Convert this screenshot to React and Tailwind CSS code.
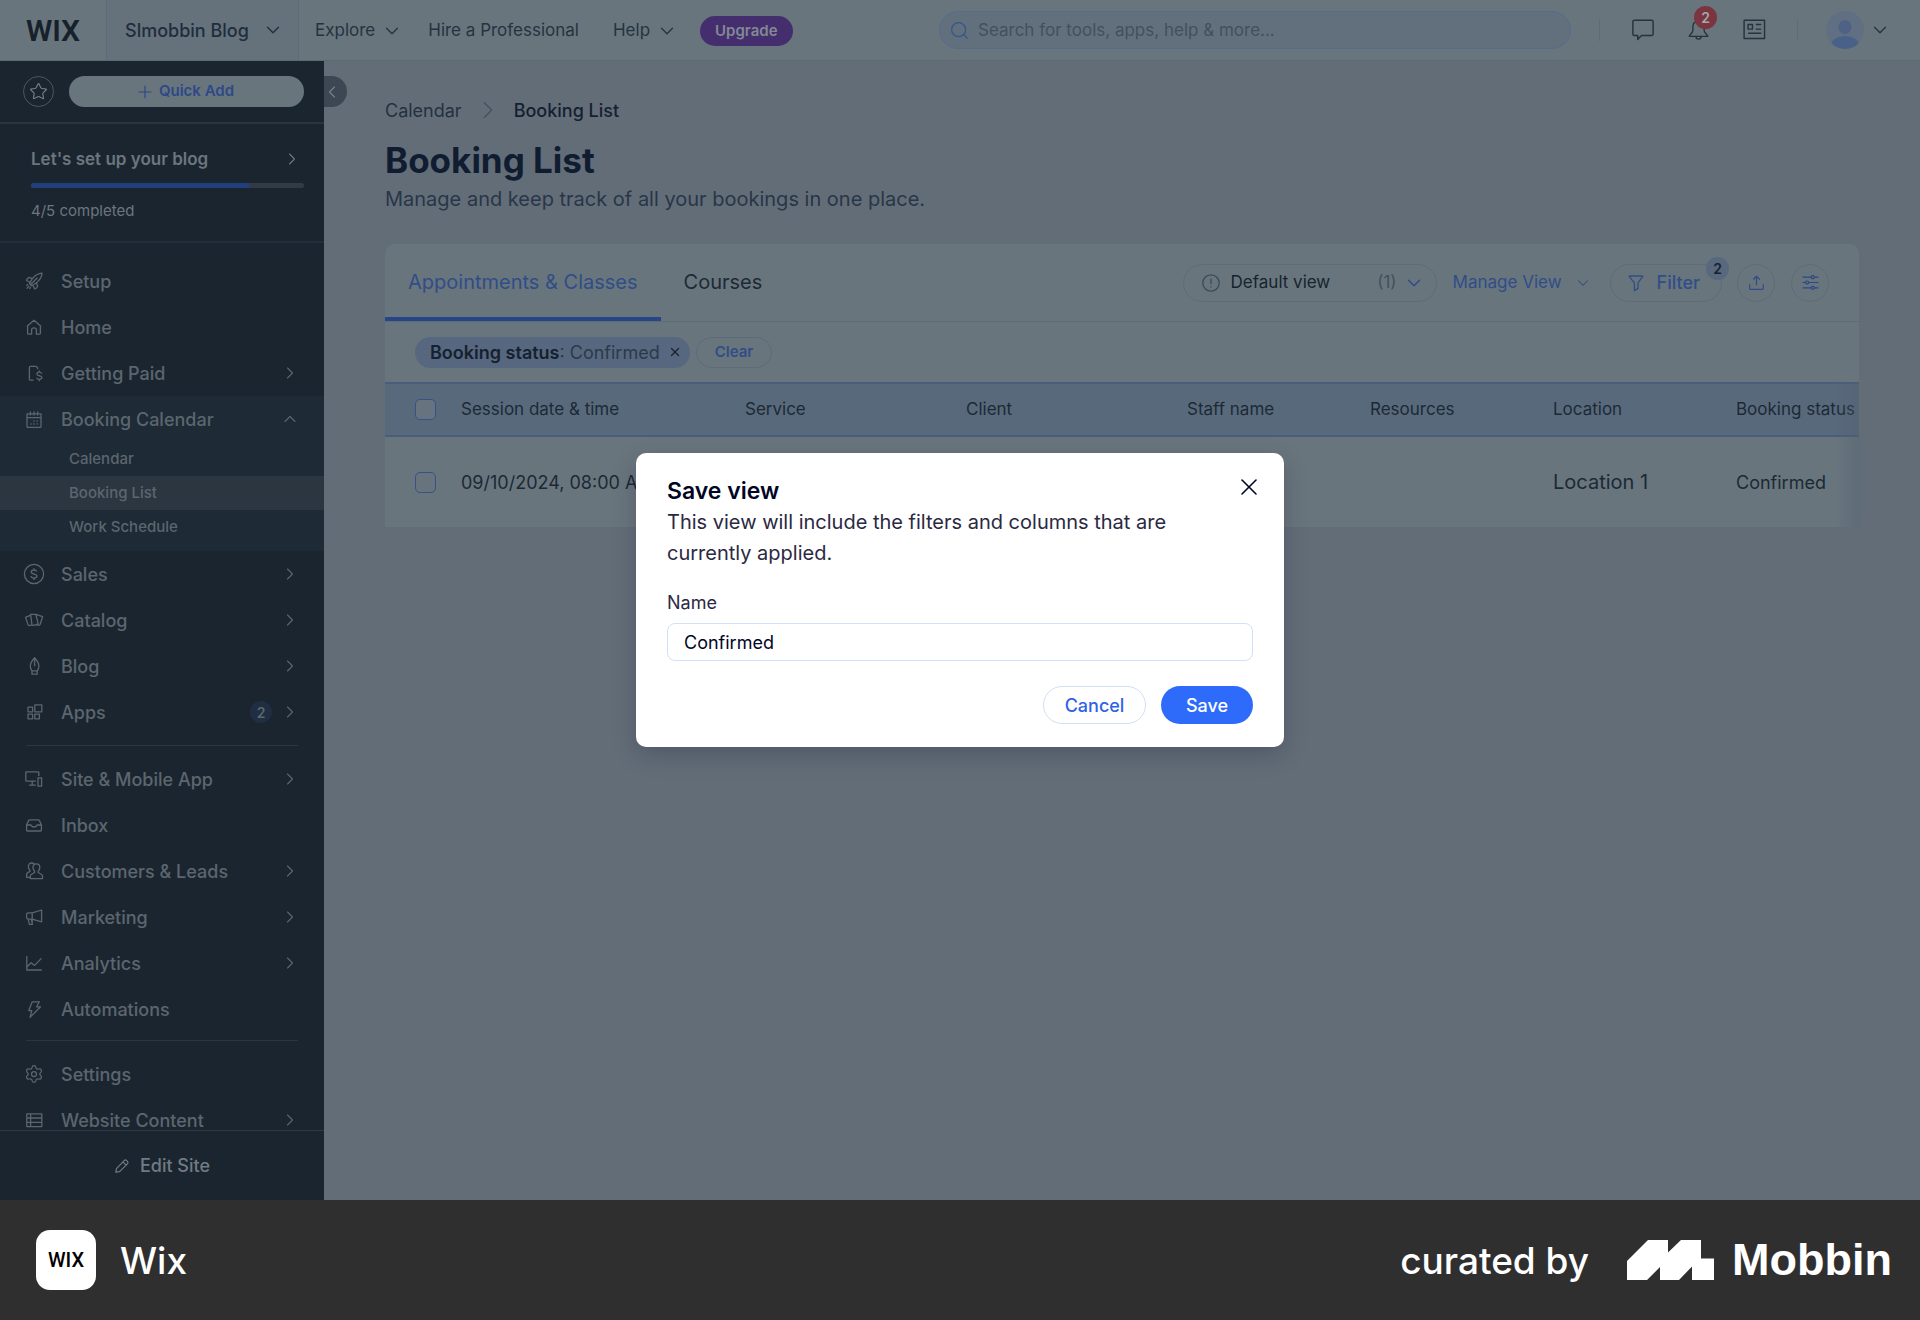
import { useState } from "react";
import { ChevronDown, ChevronLeft, ChevronRight, ChevronUp, Plus, Search, Settings, Star, X } from "lucide-react";

const ICONS = {
  rocket:
    "M17 1.2c-4 .2-7 2.2-10 6L4.4 11.6l2.2 2.2 4.2-2.6c4-3 6-6 6.2-10zM7.4 6.6 4.2 5.4c-1.2.4-2.3 1.6-2.7 3.1l3.7 2M11.4 10.8l1.2 3.4c-.4 1.3-1.4 2.2-2.8 2.8l-2-3.8M12.4 5.8 5.4 12.8M3 12.2l-1.6 1.6M4.2 14l-2.6 2.6M5.8 15.2l-1.6 1.6",
  home: "M1.8 8.4 9 2.2l7.2 6.2M2.6 7.8v7.4c0 .6.4 1 1 1h3v-4.4c0-1.2.9-2 2.4-2s2.4.8 2.4 2v4.4h3c.6 0 1-.4 1-1V7.8",
  paid: "M12.6 5.2V3.8l-1.4-1.4H5.4c-.6 0-1 .4-1 1v11.8c0 .6.4 1 1 1h3.2M16.8 9.6c-.3-1-1.2-1.5-2.5-1.5s-2.4.6-2.4 1.8c0 2.7 5 1 5 3.7 0 1.2-1 1.8-2.5 1.8s-2.5-.6-2.7-1.7M14.3 6.4v1.7M14.3 15.4v1.8",
  calendar:
    "M2 3.8h14v12.6c0 .6-.4 1-1 1H3c-.6 0-1-.4-1-1zM2 7.6h14M5.4 1.4v4M9 1.4v4M12.6 1.4v4M8.4 11h1.2M11.6 11h1.2M5.4 14h1.2M8.4 14h1.2M11.6 14h1.2",
  sales:
    "M9 -.6a9.6 9.6 0 1 0 0 19.2a9.6 9.6 0 1 0 0-19.2zM11.8 6.6c-.3-1-1.3-1.6-2.8-1.6s-2.7.7-2.7 2c0 3 5.6 1.1 5.6 4.1 0 1.3-1.2 2-2.9 2s-2.8-.7-3-1.9M9 3.2V5M9 13.1v1.8",
  catalog:
    "M5.6 3.4h5.2l2.2 8.2c.2.8-.2 1.6-1 1.8l-3.4.9c-.8.2-1.5-.2-1.7-1zM5.2 4.4l-4.6 2 2.4 7.2c.3.8 1 1.1 1.8.9l2-.7M11 3.4l6.6 2.2-2.4 7.6c-.3.8-.9 1.2-1.7 1l-2.5-.7",
  blog: "M9.6 .8c-3 3.4-4.3 6-4.3 8.3 0 1.8.8 3.6 1.6 4.8h5.4c.8-1.2 1.6-3 1.6-4.8 0-2.3-1.3-4.9-4.3-8.3zM9.6 .8v8.4M7 14v3.2h5.2V14",
  apps: "M9.8 1.8h7v7h-7zM3 4.2h4.6v4.6H3zM3 11.2h4.6v4.6H3zM9.8 11.2h4.6v4.6H9.8z",
  site: "M13.8 6V2.6c0-.5-.3-.8-.8-.8H1.6c-.5 0-.8.3-.8.8v7.8c0 .5.3.8.8.8h9.2M7.2 11.2v4M4 15.2h6.8M13 7.8h3.6v8.4H13z",
  inbox:
    "M1.6 8.8l2.2-4.4c.2-.4.5-.6.9-.6h8.6c.4 0 .7.2.9.6l2.2 4.4v5.4c0 .5-.3.8-.8.8H2.4c-.5 0-.8-.3-.8-.8zM1.6 9h4.2c.4 0 .4 2 3.2 2s2.8-2 3.2-2h4.2",
  customers:
    "M11.4 1.8c2 0 3.4 1.6 3.4 3.8 0 1.6-.6 2.9-1.6 3.7v1.2l3.4 2c.6.4.9 1 .9 1.7v2.4H5.3v-2.4c0-.7.3-1.3.9-1.7l3.4-2V9.3C8.6 8.5 8 7.2 8 5.6c0-2.2 1.4-3.8 3.4-3.8zM9 2c-.6-.7-1.4-1-2.3-1C4.7 1 3.4 2.5 3.4 4.7c0 1.5.6 2.7 1.5 3.5v1.2l-2.4 1.5c-.6.4-.9 1-.9 1.7v2.8h3.5",
  marketing:
    "M7.2 4.8 16.6 2v11.8l-9.4-2.6zM7.2 4.8H3.4c-1 0-1.8.8-1.8 1.8v2.8c0 1 .8 1.8 1.8 1.8h3.8M3.2 11.2l1.2 5.2h3l-1-5.2M7.2 11.2v5.2",
  analytics: "M1.8 2v14h15M1.8 13l4.4-4.2 3.4 2.6 6.8-7",
  automations: "M7.2 1.8h7.2l-2.8 5h4L5 17.4l1.8-6.8H3.8z",
  content: "M1.8 2.8h15v12.8h-15zM5.6 2.8v12.8M1.8 7h15M1.8 11.3h15",
  pencil: "M2 15.9l.8-4 8.6-9c.8-.8 2-.8 2.8 0l.9.9c.8.8.8 2 0 2.8l-8.8 8.7zM10 4.4l3.6 3.6",
  chat: "M2.2 1.2h15.6c.8 0 1.4.6 1.4 1.4v11c0 .8-.6 1.4-1.4 1.4H8.6L5.2 18.6V15h-3c-.8 0-1.4-.6-1.4-1.4v-11c0-.8.6-1.4 1.4-1.4z",
  bell: "M10 1.2c-3.4 0-5.4 2.4-5.4 5.6v3.4c0 2-2.8 3-3.4 5.4h17.6c-.6-2.4-3.4-3.4-3.4-5.4V6.8c0-3.2-2-5.6-5.4-5.6zM7.6 15.8c0 1.4 1 2.4 2.4 2.4s2.4-1 2.4-2.4",
  news: "M1 1.2h18.6v16.6H1zM4.6 5h4v4.2h-4zM11.6 5h5M11.6 9.2h5M4.6 13h12",
  filter: "M1.6 2h12.8c.4 0 .5.4.3.7L10 8.8v5.6l-3.6 2.4v-8L1.3 2.7c-.2-.3-.1-.7.3-.7z",
  share: "M9 12V2.6M5.6 5.8 9 2.4l3.4 3.4M1.8 10.8v4.4c0 .6.4 1 1 1h12.4c.6 0 1-.4 1-1v-4.4",
  sliders:
    "M.6 3.4h9.2M13 3.4h4.4M11.4 1.8a1.6 1.6 0 1 0 0 3.2a1.6 1.6 0 1 0 0-3.2zM.6 9h3.2M7 9h10.4M5.4 7.4a1.6 1.6 0 1 0 0 3.2a1.6 1.6 0 1 0 0-3.2zM.6 14.6h9.2M13 14.6h4.4M11.4 13a1.6 1.6 0 1 0 0 3.2a1.6 1.6 0 1 0 0-3.2z",
  alert: "M9 .8a8.2 8.2 0 1 0 0 16.4a8.2 8.2 0 1 0 0-16.4zM9 4.6v5.6M9 12.2v1.2",
};

function Icon({ name, size = 18, box = 18, className = "" }) {
  return (
    <svg
      width={size}
      height={size}
      viewBox={`0 0 ${box} ${box}`}
      fill="none"
      stroke="currentColor"
      strokeWidth="1.3"
      strokeLinejoin="round"
      overflow="visible"
      aria-hidden="true"
      className={`shrink-0 ${className}`}
    >
      <path d={ICONS[name]} />
    </svg>
  );
}

const mainMenu = [
  { label: "Setup", icon: "rocket" },
  { label: "Home", icon: "home" },
  { label: "Getting Paid", icon: "paid", arrow: true },
  {
    label: "Booking Calendar",
    icon: "calendar",
    children: ["Calendar", "Booking List", "Work Schedule"],
  },
  { label: "Sales", icon: "sales", arrow: true },
  { label: "Catalog", icon: "catalog", arrow: true },
  { label: "Blog", icon: "blog", arrow: true },
  { label: "Apps", icon: "apps", arrow: true, badge: 2 },
];

const siteMenu = [
  { label: "Site & Mobile App", icon: "site", arrow: true },
  { label: "Inbox", icon: "inbox" },
  { label: "Customers & Leads", icon: "customers", arrow: true },
  { label: "Marketing", icon: "marketing", arrow: true },
  { label: "Analytics", icon: "analytics", arrow: true },
  { label: "Automations", icon: "automations" },
];

const settingsMenu = [
  { label: "Settings", icon: "settings" },
  { label: "Website Content", icon: "content", arrow: true },
];

const columns = [
  { label: "Session date & time", width: "w-[284px]" },
  { label: "Service", width: "w-[221px]" },
  { label: "Client", width: "w-[221px]" },
  { label: "Staff name", width: "w-[183px]" },
  { label: "Resources", width: "w-[183px]" },
  { label: "Location", width: "w-[183px]" },
  { label: "Booking status", width: "w-[183px]" },
];

function MenuItem({ item }) {
  return (
    <li className={item.children ? "bg-[#1e2a35] pb-[7px]" : ""}>
      <a href="#" className="flex h-[46px] items-center pl-[25px] pr-6 text-[18px] font-medium">
        {item.icon === "settings" ? (
          <Settings size={20} strokeWidth={1.5} className="-mx-px shrink-0" />
        ) : (
          <Icon name={item.icon} />
        )}
        <span className="ml-[18px] flex-1">{item.label}</span>
        {item.badge && (
          <span className="mr-2 flex size-[22px] items-center justify-center rounded-full bg-[#202e43] text-[14px] font-semibold">
            {item.badge}
          </span>
        )}
        {item.arrow && <ChevronRight size={20} strokeWidth={1.3} />}
        {item.children && <ChevronUp size={20} strokeWidth={1.3} />}
      </a>
      {item.children && (
        <ul>
          {item.children.map((child) => (
            <li key={child}>
              <a
                href="#"
                className={`flex h-[34px] items-center pl-[69px] text-[15px] font-medium ${
                  child === "Booking List" ? "bg-[#2b3641]" : ""
                }`}
              >
                {child}
              </a>
            </li>
          ))}
        </ul>
      )}
    </li>
  );
}

function Menu({ items }) {
  return (
    <ul>
      {items.map((item) => (
        <MenuItem key={item.label} item={item} />
      ))}
    </ul>
  );
}

function Header() {
  return (
    <header className="flex h-[61px] shrink-0 items-center border-b border-[#5d6973] bg-[#69757d] text-[17px] text-[#25333f]">
      <a
        href="#"
        className="flex h-full w-[107px] shrink-0 items-center justify-center border-r border-[#5f6b76] font-['Roboto',sans-serif] text-[30px] font-semibold text-[#16212b]"
      >
        WIX
      </a>
      <button className="flex h-full w-[192px] shrink-0 items-center justify-between border-r border-[#5f6b76] bg-[#65727c] pl-[18px] pr-[14px] text-[18px] font-medium text-[#1f2d3c]">
        Slmobbin Blog
        <ChevronDown size={22} strokeWidth={1.4} />
      </button>
      <nav className="flex shrink-0 items-center pl-4 pt-0.5">
        <button className="flex items-center gap-1.5">
          Explore
          <ChevronDown size={22} strokeWidth={1.4} />
        </button>
        <a href="#" className="ml-[25px]">
          Hire a Professional
        </a>
        <button className="ml-[34px] flex items-center gap-1.5">
          Help
          <ChevronDown size={22} strokeWidth={1.4} />
        </button>
        <button className="ml-[22px] h-[30px] rounded-full bg-[#442e6e] px-[15px] text-[15px] font-semibold text-[#828995]">
          Upgrade
        </button>
      </nav>
      <div className="ml-auto flex h-[38px] w-[632px] items-center gap-2 rounded-full border border-[#586b8d] bg-[#61707c] pl-[9px]">
        <Search size={21} strokeWidth={1.5} className="shrink-0 text-[#37568a]" />
        <input
          type="text"
          aria-label="Search"
          placeholder="Search for tools, apps, help & more..."
          className="w-full bg-transparent pt-0.5 text-[17px] outline-none placeholder:text-[#42505c]"
        />
      </div>
      <div className="flex shrink-0 items-center pl-7 pr-[29px]">
        <span className="h-[22px] w-px bg-[#5f6b76]" />
        <button aria-label="Chat" className="ml-8">
          <Icon name="chat" size={22} box={20} />
        </button>
        <button aria-label="Notifications" className="relative ml-[34px]">
          <Icon name="bell" size={21} box={20} />
          <span className="absolute -right-2 -top-[14px] flex size-[23px] items-center justify-center rounded-full bg-[#7b3540] text-[14px] font-semibold text-[#a3a8ac]">
            2
          </span>
        </button>
        <button aria-label="News" className="ml-[34px]">
          <Icon name="news" size={22} box={20} />
        </button>
        <span className="ml-8 h-[22px] w-px bg-[#5f6b76]" />
        <button aria-label="Account" className="ml-7 flex items-center gap-[5px]">
          <svg width="38" height="38" viewBox="0 0 38 38" aria-hidden="true">
            <clipPath id="avatar">
              <circle cx="19" cy="19" r="19" />
            </clipPath>
            <g clipPath="url(#avatar)">
              <rect width="38" height="38" fill="#616f83" />
              <ellipse cx="19" cy="16" rx="6.5" ry="7" fill="#4d6285" />
              <ellipse cx="19" cy="34.5" rx="14" ry="9.5" fill="#496089" />
            </g>
          </svg>
          <ChevronDown size={22} strokeWidth={1.4} />
        </button>
      </div>
    </header>
  );
}

function Sidebar() {
  return (
    <aside className="relative flex w-[324px] shrink-0 flex-col bg-[#1b2530] text-[#5b666f]">
      <div className="flex shrink-0 items-center gap-[15px] border-b-2 border-[#28343e] pb-[15px] pl-[23px] pr-5 pt-[15px]">
        <button aria-label="Favorites" className="flex size-[31px] shrink-0 items-center justify-center rounded-full border border-[#4a5660] text-[#76828a]">
          <Star size={19} strokeWidth={1.4} />
        </button>
        <button className="flex h-[31px] flex-1 items-center justify-center gap-1 rounded-full bg-[#69757d] pr-1 text-[15px] font-semibold text-[#2c4988]">
          <Plus size={20} strokeWidth={1.4} />
          Quick Add
        </button>
      </div>
      <div className="shrink-0 border-b-2 border-[#222e39] pb-[18px] pl-[31px] pr-5 pt-[23px] text-[#6b767e]">
        <a href="#" className="flex items-center justify-between pr-0.5 text-[17px] font-semibold leading-6">
          Let's set up your blog
          <ChevronRight size={20} strokeWidth={1.3} />
        </a>
        <div className="mt-3 h-[5px] rounded-full bg-[#303b46]">
          <div className="h-full w-4/5 rounded-l-full bg-[#223f7d]" />
        </div>
        <p className="mt-[11px] text-[15px] leading-6">4/5 completed</p>
      </div>
      <nav className="min-h-0 flex-1 overflow-hidden pt-[15px]">
        <Menu items={mainMenu} />
        <hr className="mx-[26px] my-2.5 border-[#2a3640]" />
        <Menu items={siteMenu} />
        <hr className="mx-[26px] mb-2.5 mt-2 border-[#2a3640]" />
        <Menu items={settingsMenu} />
      </nav>
      <a href="#" className="flex h-[70px] shrink-0 items-center justify-center gap-2.5 border-t border-[#2d3944] text-[18px] font-medium text-[#707b83]">
        <Icon name="pencil" size={16} />
        Edit Site
      </a>
      <button
        aria-label="Collapse sidebar"
        className="absolute left-full top-[15px] flex h-[31px] w-[23px] items-center rounded-r-full bg-[#3c4753] text-[#76808a]"
      >
        <ChevronLeft size={20} strokeWidth={1.4} className="-ml-0.5" />
      </button>
    </aside>
  );
}

function Toolbar() {
  return (
    <div className="flex items-center justify-between border-b border-[#5f6b75] pr-[30px]">
      <div className="flex h-[77px] text-[20px]">
        <button className="border-b-4 border-[#264687] px-[23px] pt-0.5 text-[#304d87]">Appointments & Classes</button>
        <button className="border-b-4 border-transparent px-[23px] pt-0.5 text-[#1d2a36]">Courses</button>
      </div>
      <div className="flex items-center text-[17px]">
        <button className="flex h-[38px] w-[254px] items-center rounded-full border border-[#5f6b77] pl-[18px] pr-[11px] text-[#17232e]">
          <Icon name="alert" className="text-[#3c4a56]" />
          <span className="ml-[11px] flex-1 text-left">Default view</span>
          <span className="mr-1.5 text-[#43505c]">(1)</span>
          <ChevronDown size={22} strokeWidth={1.5} className="text-[#2d4b88]" />
        </button>
        <button className="ml-4 flex items-center gap-3 text-[#304d87]">
          Manage View
          <ChevronDown size={18} strokeWidth={1.4} />
        </button>
        <button className="relative ml-[18px] flex h-[38px] items-center gap-[11px] rounded-full border border-[#5f6b77] pl-[17px] pr-[21px] text-[18px] font-medium text-[#304d87]">
          <Icon name="filter" />
          Filter
          <span className="absolute -right-2 -top-2 flex size-[23px] items-center justify-center rounded-full bg-[#58687f] text-[14px] font-semibold text-[#16222f]">
            2
          </span>
        </button>
        <button aria-label="Export" className="ml-[15px] flex size-[38px] items-center justify-center rounded-full border border-[#5f6b77] text-[#304d87]">
          <Icon name="share" size={17} />
        </button>
        <button aria-label="Columns" className="ml-4 flex size-[38px] items-center justify-center rounded-full border border-[#5f6b77] text-[#2b4885]">
          <Icon name="sliders" size={17} />
        </button>
      </div>
    </div>
  );
}

function Checkbox({ label }) {
  return (
    <input
      type="checkbox"
      aria-label={label}
      className="block size-[21px] appearance-none rounded-[5px] border border-[#375289] bg-[#67737d]"
    />
  );
}

function BookingTable() {
  return (
    <div className="relative overflow-hidden">
      <table className="w-[1534px] table-fixed text-left text-[18px] text-[#1c2935]">
        <thead className="text-[17px]">
          <tr className="h-[53px] border-y-2 border-[#4a5d7b] bg-[#59697c]">
            <th className="w-[76px] pl-[30px]">
              <Checkbox label="Select all" />
            </th>
            {columns.map((column) => (
              <th key={column.label} className={`${column.width} font-normal`}>
                {column.label}
              </th>
            ))}
          </tr>
        </thead>
        <tbody>
          <tr className="h-[91px]">
            <td className="pl-[30px]">
              <Checkbox label="Select booking" />
            </td>
            <td className="whitespace-nowrap">09/10/2024, 08:00 AM</td>
            <td></td>
            <td></td>
            <td></td>
            <td></td>
            <td className="text-[20px]">Location 1</td>
            <td>Confirmed</td>
          </tr>
        </tbody>
      </table>
      {/* scroll hint */}
      <div className="pointer-events-none absolute inset-y-0 right-0 w-6 bg-gradient-to-r from-transparent to-[#50607070]" />
    </div>
  );
}

function SaveViewModal() {
  const [name, setName] = useState("Confirmed");
  return (
    <div className="absolute inset-0 flex items-center justify-center">
      <div
        role="dialog"
        aria-labelledby="save-view-title"
        className="relative w-[648px] rounded-[10px] bg-white px-[31px] py-[23px] text-[#2b2942] shadow-[0_8px_24px_rgba(0,6,36,0.2)]"
      >
        <h2 id="save-view-title" className="text-[23px] font-semibold leading-[31px] text-[#000624]">
          Save view
        </h2>
        <p className="max-w-[520px] text-[20px] leading-[31px]">
          This view will include the filters and columns that are currently applied.
        </p>
        <label htmlFor="view-name" className="mt-5 block text-[18px] leading-7">
          Name
        </label>
        <input
          id="view-name"
          type="text"
          value={name}
          onChange={(e) => setName(e.target.value)}
          className="mt-1.5 h-[38px] w-full rounded-lg border border-[#d3e0fb] px-4 text-[18px] text-[#000624] outline-none"
        />
        <div className="mt-[25px] flex justify-end gap-[15px] text-[18px]">
          <button className="h-[38px] w-[103px] rounded-full border border-[#d3ddf5] font-medium text-[#2f62e8]">Cancel</button>
          <button className="h-[38px] w-[92px] rounded-full bg-[#2f6bfa] font-medium text-white">Save</button>
        </div>
        <button aria-label="Close" className="absolute right-[21px] top-5 text-[#000624]">
          <X size={28} strokeWidth={1.4} />
        </button>
      </div>
    </div>
  );
}

function Footer() {
  return (
    <footer className="flex h-[120px] shrink-0 items-center bg-[#2f2f2f] pl-9 pr-7 text-[37px] font-medium text-white">
      <div className="flex size-[60px] items-center justify-center rounded-[14px] bg-white font-['Roboto',sans-serif] text-[20px] text-black">
        WIX
      </div>
      <span className="ml-6 pt-0.5">Wix</span>
      <span className="ml-auto pt-0.5">curated by</span>
      <svg width="87" height="40" viewBox="0 0 87 40" fill="currentColor" aria-hidden="true" className="ml-[38px]">
        <path d="M0 21 21 0h20v12.5L54 0h20v18.5h13V40H65V26.5L52 40H33V27L20 40H0z" />
      </svg>
      <span className="ml-[18px] font-['Liberation_Sans',sans-serif] text-[45px] font-bold">Mobbin</span>
    </footer>
  );
}

export default function App() {
  return (
    <div className="flex h-screen flex-col font-['Inter','Liberation_Sans',sans-serif]">
      <div className="relative flex min-h-0 flex-1 flex-col bg-[#636d78]">
        <Header />
        <div className="flex min-h-0 flex-1">
          <Sidebar />
          <main className="min-w-0 flex-1 px-[61px] pt-9">
            <div className="flex h-[26px] items-center text-[18px] text-[#233140]">
              <a href="#">Calendar</a>
              <ChevronRight size={30} strokeWidth={0.9} className="mx-[11px] text-[#43505e]" />
              <span className="font-medium text-[#142031]">Booking List</span>
            </div>
            <h1 className="mt-3 text-[35px] font-bold leading-[50px] text-[#101c30]">Booking List</h1>
            <p className="text-[20px] leading-7 text-[#283648]">
              Manage and keep track of all your bookings in one place.
            </p>
            <section className="mt-[31px] overflow-hidden rounded-t-[10px] bg-[#69757d]">
              <Toolbar />
              <div className="flex h-[60px] items-center gap-1.5 pl-[30px]">
                <span className="flex h-[31px] items-center rounded-full bg-[#57677f] pl-[15px] pr-2 text-[18px] text-[#2c3a48]">
                  <strong className="font-semibold text-[#15212f]">Booking status</strong>: Confirmed
                  <button aria-label="Remove filter" className="ml-2 text-[#15212f]">
                    <X size={14} strokeWidth={2.2} />
                  </button>
                </span>
                <button className="h-[31px] rounded-full border border-[#5d6a78] px-[18px] text-[15px] font-semibold text-[#304d87]">
                  Clear
                </button>
              </div>
              <BookingTable />
            </section>
          </main>
        </div>
        <SaveViewModal />
      </div>
      <Footer />
    </div>
  );
}
